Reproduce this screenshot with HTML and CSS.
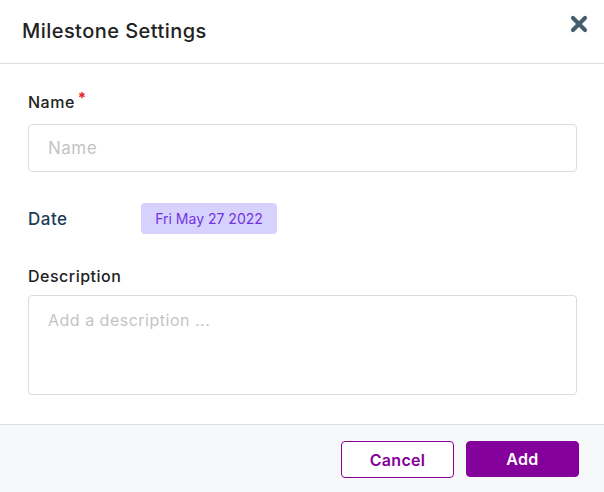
FILE: index.html
```html
<!DOCTYPE html>
<html>
<head>
<meta charset="utf-8">
<link rel="stylesheet" href="styles.css">
</head>
<body>
<div class="modal">
  <header class="header">
    <h1 class="title">Milestone Settings</h1>
    <button class="close" aria-label="Close">
      <svg width="18" height="18" viewBox="0 0 18 18"><path d="M3 3 L15 15 M15 3 L3 15" stroke="#465d6d" stroke-width="4.2" stroke-linecap="round"/></svg>
    </button>
  </header>
  <main class="body">
    <div class="field">
      <label class="label">Name<span class="req">*</span></label>
      <input class="input" type="text" placeholder="Name">
    </div>
    <div class="date-row">
      <span class="date-label">Date</span>
      <span class="chip">Fri May 27 2022</span>
    </div>
    <div class="field">
      <label class="label">Description</label>
      <textarea class="textarea" placeholder="Add a description ..."></textarea>
    </div>
  </main>
  <footer class="footer">
    <button class="btn btn-cancel">Cancel</button>
    <button class="btn btn-add">Add</button>
  </footer>
</div>
</body>
</html>
```

FILE: styles.css
```css
* { box-sizing: border-box; }
html, body { margin: 0; padding: 0; background: #fff; }
body { font-family: "Inter", "Open Sans", sans-serif; width: 604px; height: 492px; overflow: hidden; }
.modal { display: flex; flex-direction: column; height: 492px; }
.header {
  height: 64px;
  border-bottom: 1px solid #dedede;
  display: flex;
  align-items: center;
  justify-content: space-between;
  padding: 0 16px 2px 22px;
}
.title { margin: 0; font-size: 20px; font-weight: 500; color: #222; letter-spacing: 0.45px; }
.close { border: 0; background: none; padding: 0; width: 18px; height: 18px; margin-top: -14px; cursor: pointer; }
.close svg { display: block; }
.body { flex: 1; padding: 24px 27px 0 28px; }
.field { display: flex; flex-direction: column; }
.label { font-size: 16px; font-weight: 500; color: #222; line-height: 20px; margin-bottom: 12px; letter-spacing: 0.5px; }
.req { color: #e5252a; font-size: 15px; font-weight: 700; vertical-align: 5px; margin-left: 3px; }
.input {
  height: 48px;
  border: 1px solid #dcdcdc;
  border-radius: 4px;
  padding: 0 19px;
  font: inherit;
  font-size: 17px;
  letter-spacing: 0.5px;
  color: #333;
  outline: none;
}
.input::placeholder, .textarea::placeholder { color: #c4c4c4; }
.date-row { display: flex; align-items: center; margin: 31px 0 32px; height: 31px; }
.date-label { font-size: 17px; font-weight: 500; color: #1f3c55; width: 113px; letter-spacing: 0.5px; }
.chip {
  background: #d6d1fd;
  color: #7234e0;
  font-size: 14px;
  border-radius: 4px;
  height: 31px;
  width: 136px;
  display: flex;
  align-items: center;
  justify-content: center;
}
.textarea {
  height: 100px;
  border: 1px solid #dcdcdc;
  border-radius: 4px;
  padding: 14px 19px;
  font: inherit;
  font-size: 16px;
  letter-spacing: 0.5px;
  resize: none;
  outline: none;
  margin-top: -3px;
}
.footer {
  height: 68px;
  background: #f7f8fa;
  border-top: 1px solid #dedede;
  display: flex;
  justify-content: flex-end;
  align-items: flex-start;
  padding: 16px 25px 0 0;
  gap: 12px;
}
.btn {
  width: 113px;
  height: 37px;
  border-radius: 4px;
  font-family: inherit;
  font-size: 16px;
  font-weight: 600;
  letter-spacing: 0.3px;
  cursor: pointer;
}
.btn-cancel { background: #fff; border: 1px solid #8b0098; color: #84009a; }
.btn-add { background: #84009a; border: 1px solid #84009a; color: #fff; height: 36px; }
```
